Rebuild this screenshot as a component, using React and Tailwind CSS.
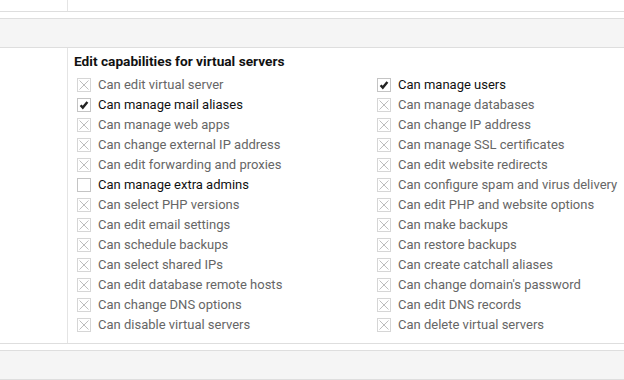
const LEFT = [
  { label: "Can edit virtual server", state: "disabled" },
  { label: "Can manage mail aliases", state: "checked" },
  { label: "Can manage web apps", state: "disabled" },
  { label: "Can change external IP address", state: "disabled" },
  { label: "Can edit forwarding and proxies", state: "disabled" },
  { label: "Can manage extra admins", state: "unchecked" },
  { label: "Can select PHP versions", state: "disabled" },
  { label: "Can edit email settings", state: "disabled" },
  { label: "Can schedule backups", state: "disabled" },
  { label: "Can select shared IPs", state: "disabled" },
  { label: "Can edit database remote hosts", state: "disabled" },
  { label: "Can change DNS options", state: "disabled" },
  { label: "Can disable virtual servers", state: "disabled" },
];

const RIGHT = [
  { label: "Can manage users", state: "checked" },
  { label: "Can manage databases", state: "disabled" },
  { label: "Can change IP address", state: "disabled" },
  { label: "Can manage SSL certificates", state: "disabled" },
  { label: "Can edit website redirects", state: "disabled" },
  { label: "Can configure spam and virus delivery", state: "disabled" },
  { label: "Can edit PHP and website options", state: "disabled" },
  { label: "Can make backups", state: "disabled" },
  { label: "Can restore backups", state: "disabled" },
  { label: "Can create catchall aliases", state: "disabled" },
  { label: "Can change domain's password", state: "disabled" },
  { label: "Can edit DNS records", state: "disabled" },
  { label: "Can delete virtual servers", state: "disabled" },
];

// little box drawn to look like the browser's own checkbox
const Box = ({ state }) => (
  <svg width="14" height="14" viewBox="0 0 14 14" className="shrink-0">
    <rect x="0.5" y="0.5" width="13" height="13" fill="#fff" stroke={state === "disabled" ? "#d6d6d6" : "#c4c4c4"} />
    {state === "disabled" && (
      <path d="M2.5 2.5 L11.5 11.5 M11.5 2.5 L2.5 11.5" stroke="#bdbdbd" strokeWidth="1" />
    )}
    {state === "checked" && (
      <path d="M3.6 7.2 L5.8 9.6 L10.4 4" fill="none" stroke="#222" strokeWidth="2.4" />
    )}
  </svg>
);

const Row = ({ item }) => (
  <div className="flex items-center h-5 gap-[7px]">
    <Box state={item.state} />
    <span className={item.state === "disabled" ? "text-[#666]" : "text-[#111]"}>{item.label}</span>
  </div>
);

export default function App() {
  return (
    <div className="w-[624px] h-[380px] bg-white overflow-hidden text-[13px]" style={{ fontFamily: "Roboto, 'Liberation Sans', sans-serif" }}>
      <div className="flex h-[12px] border-b border-[#dedede]">
        <div className="w-[68px] border-r border-[#e4e4e4]" />
        <div className="flex-1" />
      </div>

      <div className="mt-[6px] border-t border-b border-[#dedede]">
        <div className="h-[29px] bg-[#f5f5f5] border-b border-[#dedede]" />
        <div className="flex">
          <div className="w-[68px] border-r border-[#e4e4e4]" />
          <div className="flex-1 pl-[6px] pt-[3px] pb-[8px]">
            <div className="h-5 flex items-center font-bold text-[13.7px] text-[#111]">
              Edit capabilities for virtual servers
            </div>
            <div className="grid grid-cols-[300px_1fr] pl-[3px] mt-[4px]">
              <div className="flex flex-col">
                {LEFT.map((item) => <Row key={item.label} item={item} />)}
              </div>
              <div className="flex flex-col">
                {RIGHT.map((item) => <Row key={item.label} item={item} />)}
              </div>
            </div>
          </div>
        </div>
      </div>

      <div className="mt-[6px] border-t border-b border-[#dedede] h-[30px] bg-[#f5f5f5]" />
    </div>
  );
}
